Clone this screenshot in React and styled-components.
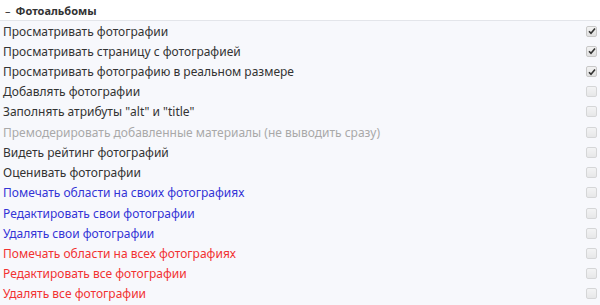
import React from "react";
import styled, { createGlobalStyle } from "styled-components";

const GlobalStyle = createGlobalStyle`
  html, body {
    margin: 0;
    padding: 0;
    background: #f7f8fc;
  }
  body {
    font-family: "Noto Sans", "Open Sans", sans-serif;
    font-size: 12px;
    color: #333;
  }
`;

const rights = [
  { label: "Просматривать фотографии", checked: true },
  { label: "Просматривать страницу с фотографией", checked: true },
  { label: "Просматривать фотографию в реальном размере", checked: true },
  { label: "Добавлять фотографии" },
  { label: 'Заполнять атрибуты "alt" и "title"' },
  { label: "Премодерировать добавленные материалы (не выводить сразу)", tone: "muted" },
  { label: "Видеть рейтинг фотографий" },
  { label: "Оценивать фотографии" },
  { label: "Помечать области на своих фотографиях", tone: "own" },
  { label: "Редактировать свои фотографии", tone: "own" },
  { label: "Удалять свои фотографии", tone: "own" },
  { label: "Помечать области на всех фотографиях", tone: "all" },
  { label: "Редактировать все фотографии", tone: "all" },
  { label: "Удалять все фотографии", tone: "all" },
];

const tones = {
  muted: "#a9a9a9",
  own: "#3434d6",
  all: "#f23232",
};

const Panel = styled.div`
  width: 600px;
  background: #f7f8fc;
`;

const Header = styled.div`
  height: 21px;
  box-sizing: border-box;
  display: flex;
  align-items: center;
  padding: 0 5px;
  background: #ffffff;
  border-bottom: 1px solid #e3e5ea;
  font-weight: 700;
  font-size: 11px;
  color: #333;
`;

const Dash = styled.span`
  margin-right: 5px;
  font-weight: 400;
`;

const List = styled.div`
  display: flex;
  flex-direction: column;
`;

const Row = styled.label`
  height: 20.23px;
  display: flex;
  align-items: center;
  justify-content: space-between;
  padding: 0 3px;
  color: ${(p) => tones[p.$tone] || "#333"};
  font-size: 12px;
`;

const Box = styled.span`
  width: 9px;
  height: 9px;
  border: 1px solid #c8c8c8;
  border-radius: 2px;
  background: linear-gradient(#f2f2f2, #e0e0e0);
  display: flex;
  align-items: center;
  justify-content: center;
  opacity: ${(p) => (p.$checked ? 1 : 0.7)};
  svg {
    display: block;
  }
`;

function Check({ checked }) {
  return (
    <Box $checked={checked}>
      {checked && (
        <svg width="8" height="8" viewBox="0 0 8 8">
          <path d="M1 4.2 L3 6.3 L7 1.5" fill="none" stroke="#333" strokeWidth="1.6" />
        </svg>
      )}
    </Box>
  );
}

export default function App() {
  return (
    <>
      <GlobalStyle />
      <Panel>
        <Header>
          <Dash>–</Dash>Фотоальбомы
        </Header>
        <List>
          {rights.map((r) => (
            <Row key={r.label} $tone={r.tone}>
              <span>{r.label}</span>
              <Check checked={!!r.checked} />
            </Row>
          ))}
        </List>
      </Panel>
    </>
  );
}
